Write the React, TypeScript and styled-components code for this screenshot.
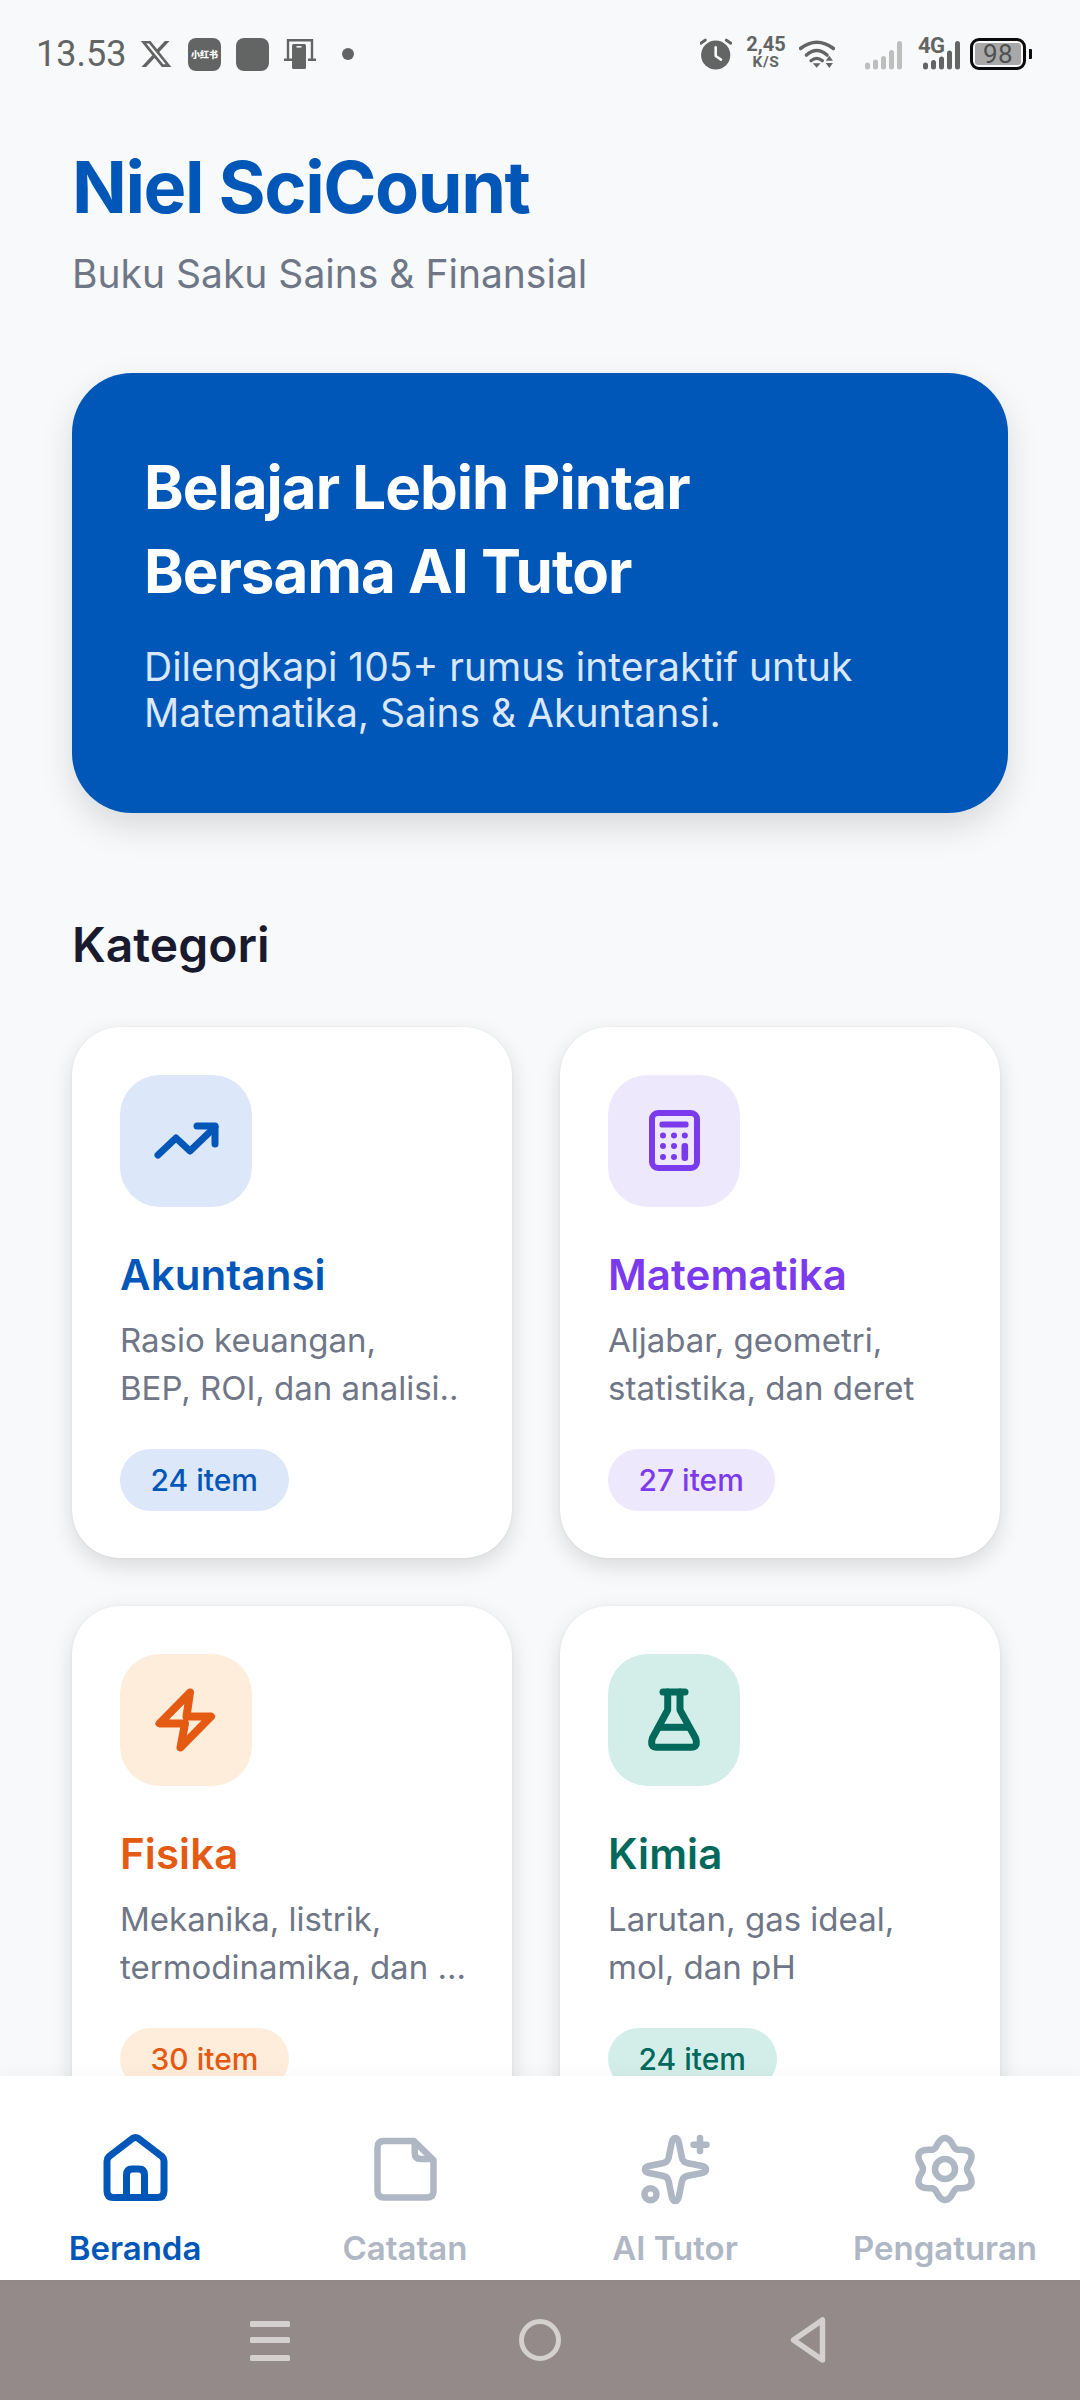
import React from "react";
import styled, { createGlobalStyle } from "styled-components";

const GlobalStyle = createGlobalStyle`
  html, body { margin: 0; padding: 0; background: #f8f9fb; }
  * { box-sizing: border-box; }
`;

const BLUE = "#0057b8";
const INACTIVE = "#b0b7c4";
const STATUS = "#636565";

const Screen = styled.div`
  width: 1080px;
  height: 2400px;
  display: flex;
  flex-direction: column;
  overflow: hidden;
  background: #f8f9fb;
  font-family: Inter, "Noto Sans", sans-serif;
`;

const StatusBar = styled.div`
  flex: none;
  height: 108px;
  display: flex;
  align-items: center;
  justify-content: space-between;
  padding: 0 48px 0 36px;
  color: ${STATUS};
  font-family: Roboto, sans-serif;
`;
const StatusGroup = styled.div`
  display: flex;
  align-items: center;
`;
const Clock = styled.span`
  width: 90px;
  font-size: 36px;
  font-weight: 400;
  margin-right: 13px;
  white-space: nowrap;
`;
const StatusSvg = styled.svg<{ $ml?: number }>`
  display: block;
  flex: none;
  margin-left: ${(p) => p.$ml ?? 0}px;
`;
const AppTile = styled.div<{ $ml: number }>`
  width: 33px;
  height: 33px;
  margin-left: ${(p) => p.$ml}px;
  border-radius: 8px;
  background: ${STATUS};
  color: #fff;
  display: flex;
  align-items: center;
  justify-content: center;
  font: 900 9px "Noto Sans CJK SC", sans-serif;
  white-space: nowrap;
`;
const Speed = styled.div`
  margin-left: 15px;
  width: 38px;
  padding-bottom: 4px;
  display: flex;
  flex-direction: column;
  align-items: center;
  font-weight: 700;
`;
const SpeedValue = styled.span`
  font-size: 20px;
  line-height: 20px;
`;
const SpeedUnit = styled.span`
  font-size: 15.5px;
  line-height: 16px;
  letter-spacing: 0.6px;
`;
const Network = styled.div`
  position: relative;
  margin-left: 16px;
  width: 42px;
  height: 32px;
`;
const NetworkLabel = styled.span`
  position: absolute;
  left: 0;
  top: -2px;
  font-size: 22px;
  line-height: 20px;
  font-weight: 700;
  letter-spacing: -0.5px;
`;
const Battery = styled.div`
  margin-left: 10px;
  width: 56px;
  height: 32px;
  border: 3px solid #0b0b0b;
  border-radius: 9px;
  padding: 2px;
  display: flex;
`;
const BatteryFill = styled.div`
  flex: 1;
  border-radius: 3px;
  background: #a8a8a8;
  color: #4f5051;
  font-size: 26px;
  line-height: 22px;
  text-align: center;
  letter-spacing: 0.5px;
`;
const BatteryNub = styled.div`
  margin-left: 3px;
  width: 3px;
  height: 10px;
  background: #0b0b0b;
  border-radius: 0 1px 1px 0;
`;

const Main = styled.main`
  flex: 1;
  min-height: 0;
  overflow: hidden;
  padding: 35px 72px 0;
`;
const Title = styled.h1`
  margin: 0;
  font-size: 72px;
  line-height: 88px;
  font-weight: 700;
  letter-spacing: -1.45px;
  color: ${BLUE};
`;
const Subtitle = styled.p`
  margin: 19px 0 0;
  font-size: 39px;
  line-height: 48px;
  color: #6f7686;
`;
const Hero = styled.section`
  margin-top: 75px;
  height: 440px;
  padding: 72px 72px 0;
  background: ${BLUE};
  border-radius: 60px;
  box-shadow: 0 14px 34px rgba(0, 0, 0, 0.13);
`;
const HeroTitle = styled.h2`
  margin: 0;
  font-size: 60px;
  line-height: 84px;
  font-weight: 700;
  letter-spacing: -1px;
  color: #fff;
`;
const HeroText = styled.p`
  margin: 31px 0 0;
  font-size: 39px;
  line-height: 46px;
  color: #dbe7fb;
`;
const SectionTitle = styled.h2`
  margin: 100px 0 0;
  font-size: 48px;
  line-height: 64px;
  font-weight: 600;
  color: #1a1a2e;
`;
const Grid = styled.div`
  margin-top: 50px;
  display: grid;
  grid-template-columns: 440px 440px;
  gap: 48px;
`;
const Card = styled.article`
  height: 531px;
  padding: 48px;
  background: #fff;
  border-radius: 48px;
  box-shadow: 0 8px 22px rgba(0, 0, 0, 0.13), 0 0 2px rgba(0, 0, 0, 0.08);
`;
const IconBox = styled.div<{ $bg: string }>`
  width: 132px;
  height: 132px;
  border-radius: 40px;
  background: ${(p) => p.$bg};
  display: flex;
  align-items: center;
  justify-content: center;
`;
const CardTitle = styled.h3<{ $color: string }>`
  margin: 40px 0 0;
  font-size: 42px;
  line-height: 56px;
  font-weight: 600;
  letter-spacing: 0.1px;
  color: ${(p) => p.$color};
`;
const CardDesc = styled.div`
  margin-top: 13px;
  font-size: 33px;
  line-height: 48px;
  color: #6f7686;
`;
const DescLine = styled.div`
  white-space: nowrap;
`;
const Pill = styled.span<{ $bg: string; $color: string }>`
  display: inline-block;
  margin-top: 37px;
  height: 62px;
  padding: 0 31px 0 30.5px;
  border-radius: 31px;
  background: ${(p) => p.$bg};
  color: ${(p) => p.$color};
  font-size: 30px;
  font-weight: 500;
  line-height: 62px;
`;

const BottomNav = styled.nav`
  flex: none;
  position: relative;
  height: 204px;
  background: #fff;
  display: grid;
  grid-template-columns: repeat(4, 1fr);
  padding: 55px 0 0;
  box-shadow: 0 -3px 14px rgba(0, 0, 0, 0.035);
`;
const NavItem = styled.div`
  display: flex;
  flex-direction: column;
  align-items: center;
`;
const NavIconBox = styled.div`
  height: 72px;
`;
const NavLabel = styled.span<{ $active?: boolean }>`
  margin-top: 23px;
  font-size: 33px;
  line-height: 44px;
  font-weight: 600;
  color: ${(p) => (p.$active ? BLUE : INACTIVE)};
`;
const SystemBar = styled.div`
  flex: none;
  height: 120px;
  background: #938a89;
  display: flex;
  align-items: center;
  justify-content: center;
  gap: 229px;
  padding-right: 5px;
`;

const Xlogo = () => (
  <StatusSvg $ml={0} width="34" height="32" viewBox="0 0 24 24" fill={STATUS} preserveAspectRatio="none">
    <path d="M18.244 2.25h3.308l-7.227 8.26 8.502 11.24H16.17l-5.214-6.817L4.99 21.75H1.68l7.73-8.835L1.254 2.25H8.08l4.713 6.231zm-1.161 17.52h1.833L7.084 4.126H5.117z" />
  </StatusSvg>
);
const Cast = () => (
  <StatusSvg $ml={15} width="32" height="30" viewBox="0 0 32 30" fill="none">
    <path d="M4 21V1.2H28V21" stroke={STATUS} strokeWidth="2.4" />
    <path d="M0 20.8H8M24 20.8H32" stroke={STATUS} strokeWidth="2.4" />
    <rect x="8" y="5" width="14" height="25" rx="1.5" fill={STATUS} />
    <rect x="12.5" y="7" width="5" height="1.6" fill="#f0f0f0" />
  </StatusSvg>
);
const Dot = () => (
  <StatusSvg $ml={26} width="12" height="12" viewBox="0 0 12 12">
    <circle cx="6" cy="6" r="6" fill={STATUS} />
  </StatusSvg>
);
const Alarm = () => (
  <StatusSvg width="32" height="32" viewBox="0 0 32 32" fill="none">
    <circle cx="15.7" cy="17" r="14.6" fill={STATUS} />
    <path d="M0.8 5.2L5.2 2.2M26.4 2.2L30.8 5.2" stroke={STATUS} strokeWidth="3" strokeLinecap="round" />
    <path d="M15.7 9.2V18L21 21.6" stroke="#f8f9fb" strokeWidth="2.6" strokeLinecap="round" strokeLinejoin="round" />
  </StatusSvg>
);
const Wifi = () => (
  <StatusSvg $ml={14} width="36" height="30" viewBox="0 0 36 30" fill="none">
    <path d="M1.5 9.5Q17.7 -3 34.5 9.5" stroke={STATUS} strokeWidth="3.6" strokeLinecap="round" />
    <path d="M7.5 16Q17.7 7 28 16" stroke={STATUS} strokeWidth="3.6" strokeLinecap="round" />
    <path d="M12 21.8Q17.7 17 23.4 21.8" stroke={STATUS} strokeWidth="3.2" strokeLinecap="round" />
    <path d="M13.7 24.2H21.6L17.7 28.8Z" fill={STATUS} />
    <path d="M30.3 16.8L33.9 21.8H26.7Z" fill={STATUS} />
    <path d="M26.7 24H33.9L30.3 29Z" fill={STATUS} />
  </StatusSvg>
);
const Bars = ({ color, ml, heights }: { color: string; ml?: number; heights: number[] }) => (
  <StatusSvg $ml={ml} width="37" height="32" viewBox="0 0 37 32">
    {heights.map((h, i) => (
      <rect key={i} x={i * 8} y={31.4 - h} width="5" height={h} rx="2.5" fill={color} />
    ))}
  </StatusSvg>
);

const TrendIcon = () => (
  <svg width="72" height="72" viewBox="0 0 72 72" fill="none" stroke={BLUE} strokeWidth="7" strokeLinecap="round" strokeLinejoin="round">
    <path d="M8 50L26 33L40 46L65 22" />
    <path d="M47 21H65V39" />
  </svg>
);
const CalcIcon = () => (
  <svg width="72" height="72" viewBox="0 0 72 72" fill="none">
    <rect x="14" y="8" width="45" height="55" rx="6" stroke="#7c3aed" strokeWidth="6" />
    <rect x="21.5" y="16.5" width="29" height="6" rx="2" fill="#7c3aed" />
    {[30.5, 41, 52].flatMap((y) =>
      [25, 36, 46.8]
        .filter((x) => !(x > 40 && y > 31))
        .map((x) => <circle key={`${x}-${y}`} cx={x} cy={y} r="3" fill="#7c3aed" />)
    )}
    <rect x="43.5" y="38" width="6.6" height="18" rx="3" fill="#7c3aed" />
  </svg>
);
const BoltIcon = () => (
  <svg width="72" height="72" viewBox="0 0 72 72" fill="none" stroke="#e55a12" strokeWidth="8" strokeLinecap="round" strokeLinejoin="round">
    <path d="M40 8.5L9.5 39.5H35L30.5 63.5L61 32.5H36.5Z" />
  </svg>
);
const FlaskIcon = () => (
  <svg width="72" height="72" viewBox="0 0 72 72" fill="none" stroke="#00695c" strokeWidth="7" strokeLinecap="round" strokeLinejoin="round">
    <path d="M25 8H47" />
    <path d="M29.7 8V26L14.5 54Q11.5 63.3 19 63.3H53Q60.5 63.3 57.5 54L42 26V8" />
    <path d="M22 43.3H50.3" strokeLinecap="butt" />
  </svg>
);

const HomeIcon = () => (
  <svg width="72" height="72" viewBox="0 0 72 72" fill="none" stroke={BLUE} strokeWidth="7" strokeLinejoin="round">
    <path d="M8 30Q8 27.5 10 25.5L33.5 7.5Q36.5 5.5 39.5 7.5L63 25.5Q65 27.5 65 30V60Q65 66.5 58.5 66.5H14.5Q8 66.5 8 60Z" />
    <path d="M27.5 66V44Q27.5 38 33 38H40Q45.5 38 45.5 44V66" />
  </svg>
);
const NoteIcon = () => (
  <svg width="72" height="72" viewBox="0 0 72 72" fill="none" stroke={INACTIVE} strokeWidth="6.5" strokeLinejoin="round">
    <path d="M15 10H45L64.5 29V60Q64.5 66.5 58 66.5H15Q8.5 66.5 8.5 60V16.5Q8.5 10 15 10Z" />
    <path d="M45.7 10V22Q45.7 28 52 28H64.5" />
  </svg>
);
const SparkIcon = () => (
  <svg width="72" height="74" viewBox="0 0 72 74" fill="none" stroke={INACTIVE} strokeWidth="6.5" strokeLinecap="round" strokeLinejoin="round">
    <path d="M36.3 7Q39 7 40 12L43 27Q44 31 48 32L63 35Q67 36 67 38.5Q67 41 63 42L48 45Q44 46 43 50L40 65Q39 70 36.3 70Q33.6 70 32.6 65L29.6 50Q28.6 46 24.6 45L10 42Q6 41 6 38.5Q6 36 10 35L24.6 32Q28.6 31 29.6 27L32.6 12Q33.6 7 36.3 7Z" />
    <path d="M61 7V20M54.5 13.7H67.5" />
    <circle cx="11.5" cy="63.3" r="6" />
  </svg>
);
const flowerPath = (() => {
  const pts: string[] = [];
  for (let i = 0; i < 144; i += 1) {
    const t = (i / 144) * Math.PI * 2;
    const r = 27 + 4 * Math.cos(6 * t);
    const x = 36 + 0.96 * r * Math.sin(t);
    const y = 38 - r * Math.cos(t);
    pts.push(`${i === 0 ? "M" : "L"}${x.toFixed(2)} ${y.toFixed(2)}`);
  }
  return `${pts.join("")}Z`;
})();
const GearIcon = () => (
  <svg width="72" height="74" viewBox="0 0 72 74" fill="none" stroke={INACTIVE} strokeWidth="6.5" strokeLinejoin="round">
    <path d={flowerPath} />
    <circle cx="36" cy="38" r="10" />
  </svg>
);

const categories = [
  { title: "Akuntansi", lines: ["Rasio keuangan,", "BEP, ROI, dan analisi.."], count: "24 item", color: BLUE, bg: "#dce7f9", Icon: TrendIcon },
  { title: "Matematika", lines: ["Aljabar, geometri,", "statistika, dan deret"], count: "27 item", color: "#7c3aed", bg: "#eee8fd", Icon: CalcIcon },
  { title: "Fisika", lines: ["Mekanika, listrik,", "termodinamika, dan ..."], count: "30 item", color: "#e55a12", bg: "#ffeddc", Icon: BoltIcon },
  { title: "Kimia", lines: ["Larutan, gas ideal,", "mol, dan pH"], count: "24 item", color: "#00695c", bg: "#d3eee9", Icon: FlaskIcon },
];

const navItems = [
  { label: "Beranda", Icon: HomeIcon, active: true },
  { label: "Catatan", Icon: NoteIcon },
  { label: "AI Tutor", Icon: SparkIcon },
  { label: "Pengaturan", Icon: GearIcon },
];

export default function App() {
  return (
    <Screen>
      <GlobalStyle />
      <StatusBar>
        <StatusGroup>
          <Clock>13.53</Clock>
          <Xlogo />
          <AppTile $ml={15}>小红书</AppTile>
          <AppTile $ml={15} />
          <Cast />
          <Dot />
        </StatusGroup>
        <StatusGroup>
          <Alarm />
          <Speed>
            <SpeedValue>2,45</SpeedValue>
            <SpeedUnit>K/S</SpeedUnit>
          </Speed>
          <Wifi />
          <Bars color="#bdbfbf" ml={30} heights={[7, 10, 13.5, 19.5, 28.5]} />
          <Network>
            <NetworkLabel>4G</NetworkLabel>
            <StatusSvg width="42" height="32" viewBox="0 0 42 32">
              {[7, 9.5, 13, 19, 28.5].map((h, i) => (
                <rect key={i} x={5 + i * 8} y={31.4 - h} width="5" height={h} rx="2.5" fill={STATUS} />
              ))}
            </StatusSvg>
          </Network>
          <Battery>
            <BatteryFill>98</BatteryFill>
          </Battery>
          <BatteryNub />
        </StatusGroup>
      </StatusBar>
      <Main>
        <Title>Niel SciCount</Title>
        <Subtitle>Buku Saku Sains &amp; Finansial</Subtitle>
        <Hero>
          <HeroTitle>
            Belajar Lebih Pintar
            <br />
            Bersama AI Tutor
          </HeroTitle>
          <HeroText>
            Dilengkapi 105+ rumus interaktif untuk
            <br />
            Matematika, Sains &amp; Akuntansi.
          </HeroText>
        </Hero>
        <SectionTitle>Kategori</SectionTitle>
        <Grid>
          {categories.map(({ title, lines, count, color, bg, Icon }) => (
            <Card key={title}>
              <IconBox $bg={bg}>
                <Icon />
              </IconBox>
              <CardTitle $color={color}>{title}</CardTitle>
              <CardDesc>
                {lines.map((l) => (
                  <DescLine key={l}>{l}</DescLine>
                ))}
              </CardDesc>
              <Pill $bg={bg} $color={color}>
                {count}
              </Pill>
            </Card>
          ))}
        </Grid>
      </Main>
      <BottomNav>
        {navItems.map(({ label, Icon, active }) => (
          <NavItem key={label}>
            <NavIconBox>
              <Icon />
            </NavIconBox>
            <NavLabel $active={active}>{label}</NavLabel>
          </NavItem>
        ))}
      </BottomNav>
      <SystemBar>
        <svg width="40" height="44" viewBox="0 0 40 44" fill="#d4d0cf">
          <rect y="3" width="40" height="6" rx="1.5" />
          <rect y="19" width="40" height="6" rx="1.5" />
          <rect y="37" width="40" height="6" rx="1.5" />
        </svg>
        <svg width="42" height="42" viewBox="0 0 42 42" fill="none">
          <circle cx="21" cy="21" r="18.5" stroke="#d4d0cf" strokeWidth="5" />
        </svg>
        <svg width="36" height="48" viewBox="0 0 36 48" fill="none">
          <path d="M32.5 4V44L3.5 24Z" stroke="#d4d0cf" strokeWidth="5.5" strokeLinejoin="round" />
        </svg>
      </SystemBar>
    </Screen>
  );
}
